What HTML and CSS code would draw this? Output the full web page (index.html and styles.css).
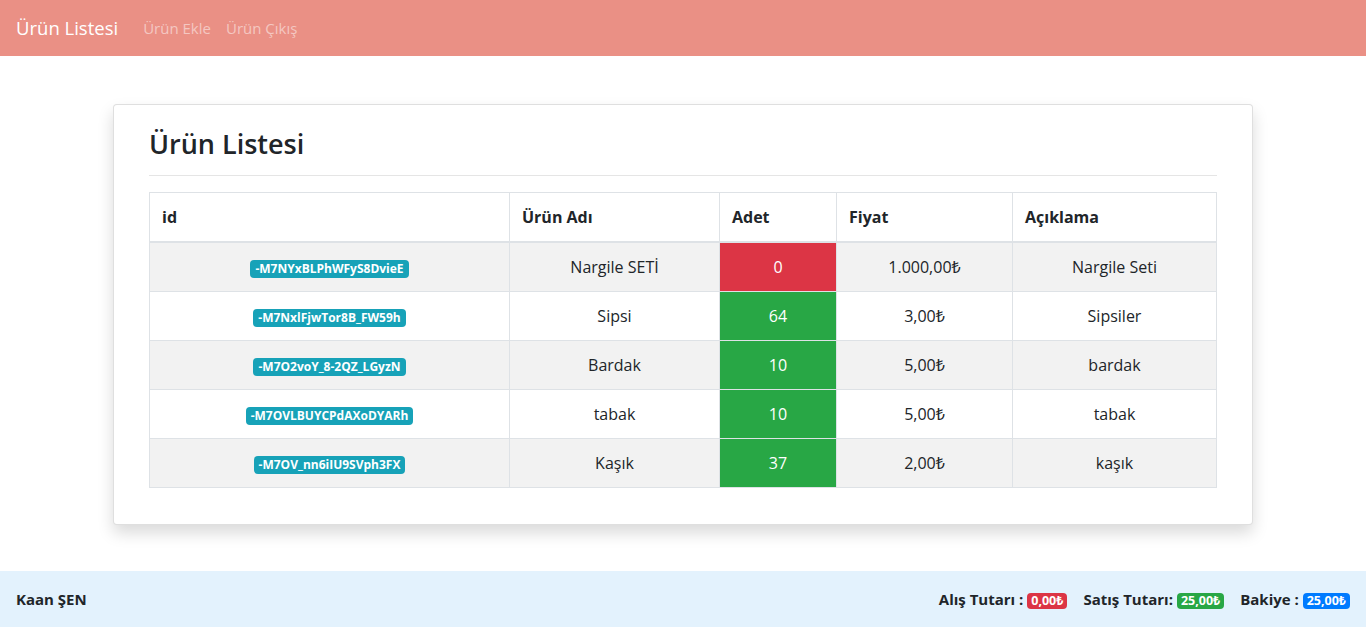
FILE: index.html
```html
<!DOCTYPE html>
<html lang="tr">
<head>
<meta charset="utf-8">
<title>Ürün Listesi</title>
<link rel="stylesheet" href="styles.css">
</head>
<body>
<nav class="navbar">
  <a class="brand" href="#">Ürün Listesi</a>
  <a class="nav-link" href="#">Ürün Ekle</a>
  <a class="nav-link" href="#">Ürün Çıkış</a>
</nav>

<main class="container">
  <div class="card">
    <div class="card-body">
      <h2 class="title">Ürün Listesi</h2>
      <hr class="rule">
      <table class="table">
        <thead>
          <tr>
            <th class="c-id">id</th>
            <th class="c-name">Ürün Adı</th>
            <th class="c-qty">Adet</th>
            <th class="c-price">Fiyat</th>
            <th class="c-desc">Açıklama</th>
          </tr>
        </thead>
        <tbody>
          <tr>
            <td><span class="badge badge-info">-M7NYxBLPhWFyS8DvieE</span></td>
            <td>Nargile SETİ</td>
            <td class="bg-danger">0</td>
            <td>1.000,00₺</td>
            <td>Nargile Seti</td>
          </tr>
          <tr>
            <td><span class="badge badge-info">-M7NxlFjwTor8B_FW59h</span></td>
            <td>Sipsi</td>
            <td class="bg-success">64</td>
            <td>3,00₺</td>
            <td>Sipsiler</td>
          </tr>
          <tr>
            <td><span class="badge badge-info">-M7O2voY_8-2QZ_LGyzN</span></td>
            <td>Bardak</td>
            <td class="bg-success">10</td>
            <td>5,00₺</td>
            <td>bardak</td>
          </tr>
          <tr>
            <td><span class="badge badge-info">-M7OVLBUYCPdAXoDYARh</span></td>
            <td>tabak</td>
            <td class="bg-success">10</td>
            <td>5,00₺</td>
            <td>tabak</td>
          </tr>
          <tr>
            <td><span class="badge badge-info">-M7OV_nn6iIU9SVph3FX</span></td>
            <td>Kaşık</td>
            <td class="bg-success">37</td>
            <td>2,00₺</td>
            <td>kaşık</td>
          </tr>
        </tbody>
      </table>
    </div>
  </div>
</main>

<footer class="footer">
  <strong class="owner">Kaan ŞEN</strong>
  <div class="totals">
    <span class="total"><strong>Alış Tutarı :</strong> <span class="badge badge-lg badge-danger">0,00₺</span></span>
    <span class="total"><strong>Satış Tutarı:</strong> <span class="badge badge-lg badge-success">25,00₺</span></span>
    <span class="total"><strong>Bakiye :</strong> <span class="badge badge-lg badge-primary">25,00₺</span></span>
  </div>
</footer>
</body>
</html>
```

FILE: styles.css
```css
* { box-sizing: border-box; }

html, body {
  margin: 0;
  padding: 0;
}

body {
  font-family: "Open Sans", "Noto Sans", "DejaVu Sans", sans-serif;
  font-size: 16px;
  line-height: 1.5;
  color: #212529;
  background: #fff;
}

a { text-decoration: none; }

.navbar {
  height: 56px;
  background: #ea9085;
  display: flex;
  align-items: center;
  padding: 0 16px;
}

.brand {
  color: #fff;
  font-size: 18.5px;
  margin-right: 17px;
  line-height: 30px;
}

.nav-link {
  color: rgba(255, 255, 255, 0.5);
  padding: 0 8px;
  font-size: 15px;
}

.nav-link + .nav-link {
  padding-left: 7px;
}

.container {
  width: 1140px;
  margin: 48px auto 0;
}

.card {
  border: 1px solid rgba(0, 0, 0, 0.125);
  border-radius: 4px;
  background: #fff;
  box-shadow: 0 8px 16px rgba(0, 0, 0, 0.15);
}

.card-body {
  padding: 20px 35px;
}

.title {
  margin: 0;
  font-size: 27px;
  font-weight: 600;
  line-height: 38px;
}

.rule {
  margin: 12px 0 16px;
  border: 0;
  border-top: 1px solid rgba(0, 0, 0, 0.1);
}

.table {
  width: 100%;
  border-collapse: collapse;
  margin-bottom: 16px;
  border: 1px solid #dee2e6;
}

.table th,
.table td {
  border: 1px solid #dee2e6;
  padding: 12px;
  line-height: 24px;
}

.table th {
  text-align: left;
  font-weight: 700;
  border-bottom: 2px solid #dee2e6;
}

.table td {
  text-align: center;
}

.table tbody tr:nth-child(odd) {
  background: rgba(0, 0, 0, 0.05);
}

.c-id { width: 360px; }
.c-name { width: 210px; }
.c-qty { width: 117px; }
.c-price { width: 176px; }

.table td.bg-danger { background: #dc3545; color: #fff; }
.table td.bg-success { background: #28a745; color: #fff; }

.badge {
  display: inline-block;
  padding: 3px 5px;
  font-size: 12px;
  font-weight: 700;
  line-height: 1;
  border-radius: 4px;
  color: #fff;
  vertical-align: baseline;
}

.badge-lg {
  font-size: 12.5px;
  padding: 2px 4px;
}

.badge-info { background: #17a2b8; }
.badge-danger { background: #dc3545; }
.badge-success { background: #28a745; }
.badge-primary { background: #007bff; }

.footer {
  margin-top: 46px;
  height: 56px;
  background: #e3f2fd;
  display: flex;
  align-items: center;
  justify-content: space-between;
  padding: 0 16px;
  font-size: 15px;
}

.owner { font-weight: 700; }

.totals {
  display: flex;
  gap: 16px;
}

.total strong { font-weight: 700; }
```
